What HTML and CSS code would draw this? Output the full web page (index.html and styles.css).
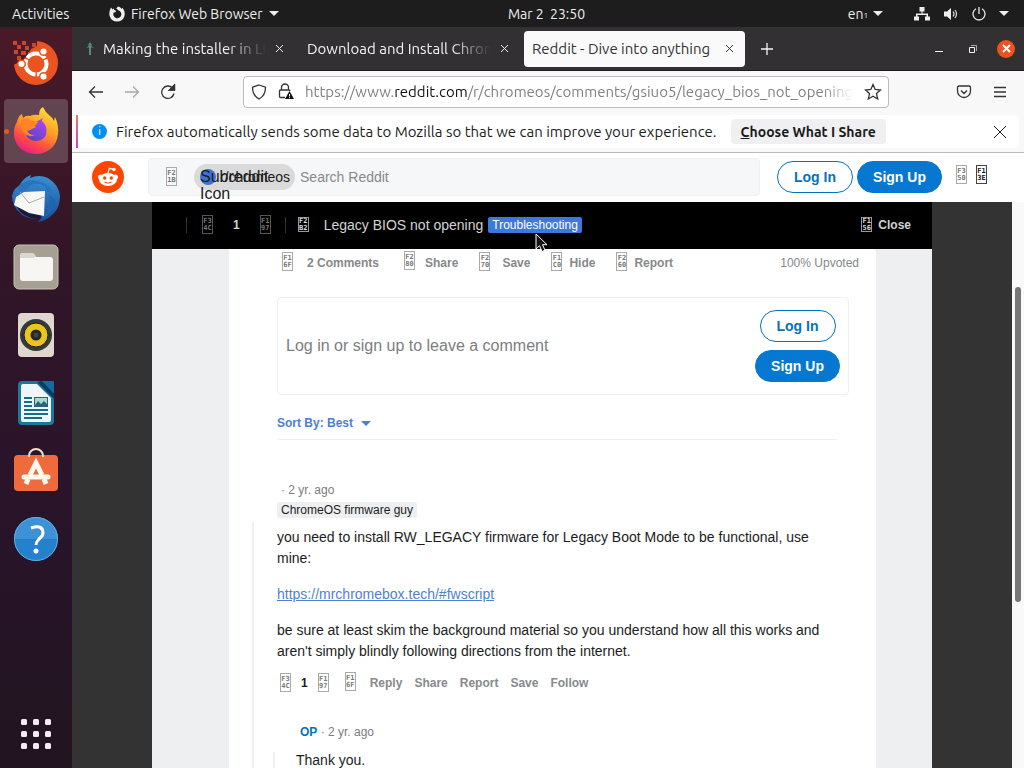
FILE: index.html
```html
<!DOCTYPE html>
<html lang="en">
<head>
<meta charset="utf-8">
<title>Reddit - Dive into anything</title>
<link rel="stylesheet" href="styles.css">
</head>
<body class="desktop">
<header class="topbar">
  <button class="top-btn">Activities</button>
  <button class="top-btn app-menu">
    <svg width="16" height="16" viewBox="0 0 16 16"><path d="M1.500 2.500C.2 5.500 0 8 .8 10.500A7.700 7.700 0 0 0 15.300 10.500C16.300 7.500 15.500 3.800 13.200 1.800L12.800 3C11.800 1.600 10.300.6 9 .5L7.300 2.500 9.300 4.300A4 4 0 1 1 4.700 6.500L6.500 6.200 7 4.700 5 3.800 4.800 2.200 3.500 3.600 2 1.500Z" fill="#eee"/></svg>
    <span>Firefox Web Browser</span><i class="tri"></i>
  </button>
  <time class="clock">Mar 2&nbsp; 23:50</time>
  <div class="status">
    <button class="top-btn lang">en<small>1</small><i class="tri"></i></button>
    <svg width="16" height="14" viewBox="0 0 16 14"><path d="M5.500 0h5v4.500h-2v2H14v3h2v4h-5v-4h1.500V8h-9v1.500H5v4H0v-4h2v-3h5.500v-2h-2z" fill="#eee"/></svg>
    <svg width="16" height="14" viewBox="0 0 16 14"><path d="M1 4.500h3L8 1v12L4 9.500H1z" fill="#eee"/><path d="M10 4.500q2 2.500 0 5M12 3q3 4 0 8" fill="none" stroke="#ddd" stroke-width="1.200"/></svg>
    <svg width="14" height="14" viewBox="0 0 14 14"><path d="M4 1.800a6 6 0 1 0 6 0M7 0v7" fill="none" stroke="#e5e5e5" stroke-width="1.300"/></svg>
    <i class="tri"></i>
  </div>
</header>
<div class="workspace">
<nav class="dock">
  <button class="dock-item" aria-label="Ubuntu"><svg width="46" height="46" viewBox="0 0 46 46"><circle cx="23" cy="23" r="22" fill="#e95420"/><path d="M0 0h24v6l-6 3-3 6-6 6-9 4z" fill="#4c1a28"/><path d="M0 1h4v4H0zM9 1h4v4H9zM4 5h4v4H4zM12 6h4v4h-4zM1 10h4v4H1zM8 11h5v4H8zM19 3h4v4h-4zM15 12h4v4h-4zM4 16h4v4H4z" fill="#c8462a"/><circle cx="23" cy="24" r="10.500" fill="none" stroke="#fff" stroke-width="4" stroke-dasharray="20.500 1.500" stroke-dashoffset="5"/><g fill="#fff" stroke="#e95420" stroke-width="1.500"><circle cx="8.500" cy="24" r="3.800"/><circle cx="30.500" cy="11.500" r="3.800"/><circle cx="30.500" cy="36.500" r="3.800"/></g></svg></button>
  <button class="dock-item active" aria-label="Firefox"><svg width="48" height="48" viewBox="0 0 48 48"><defs><linearGradient id="fx" x1=".8" y1="0" x2=".3" y2="1"><stop offset="0" stop-color="#ffe73a"/><stop offset=".45" stop-color="#ff9a24"/><stop offset=".75" stop-color="#ff4b45"/><stop offset="1" stop-color="#e81c87"/></linearGradient><linearGradient id="fy" x1=".8" y1="0" x2=".2" y2="1"><stop offset="0" stop-color="#b545ed"/><stop offset="1" stop-color="#5344c5"/></linearGradient></defs><path d="M5 15Q6 9 10 7l1 4q3-3 7-2 4-2 9-1Q27 2 31 0q2 5 7 9 3 2 4 5l1-4q4 8 3 17C45 39 36 47 24 47 11 47 2 38 2 26q0-7 3-11Z" fill="url(#fx)"/><path d="M17 14l7 1 7-4q-2 3 0 4 5 5 3 13-3 6-11 6-9-1-9-9l10-5Z" fill="url(#fy)"/><path d="M9 13q6-4 11 1l6 1q-2 5-8 5l-3 3q1 5 8 5-6 3-11-2-4-4-3-13" fill="#ff8426"/></svg></button>
  <button class="dock-item" aria-label="Thunderbird"><svg width="50" height="50" viewBox="0 0 50 50"><defs><linearGradient id="tb" x1="0" y1="0" x2="0" y2="1"><stop offset="0" stop-color="#3b91d4"/><stop offset="1" stop-color="#154c9b"/></linearGradient></defs><path d="M8 12Q13 3 20 1l-1 3q9-4 18 0 11 7 12 18 0 11-6 17-7 8-16 9l4-5q-12 4-21-3Q1 32 1 22q2-9 10-12" fill="url(#tb)"/><path d="M6 33l10 3 15 5-2 3q-16 2-23-11" fill="#1b1838"/><path d="M5 23l8-5 21-1-1 25-15-3-15-8Z" fill="#f7f7f5"/><path d="M8 12q8-8 19-5 12 2 16 14-4-4-7-3 0-6-7-8-9-1-12 4l-8 4Z" fill="#2775bd"/><path d="M9 18l9 11 15-6" fill="none" stroke="#aaa"/><path d="M38 20q4 13-8 25 13-5 14-19" fill="#2065ae"/></svg></button>
  <button class="dock-item" aria-label="Files"><svg width="46" height="46" viewBox="0 0 46 46"><rect x="1" y="1" width="44" height="44" rx="5" fill="#a69f94" stroke="#c8c2b8"/><path d="M7 12q0-3 3-3h10l3 4h14q3 0 3 3v18q0 3-3 3H10q-3 0-3-3Z" fill="#f7f6f2"/><path d="M7 14h14l2-2-3-3H10q-3 0-3 3Z" fill="#dbd7ce"/></svg></button>
  <button class="dock-item" aria-label="Rhythmbox"><svg width="46" height="46" viewBox="0 0 46 46"><rect x="5" y="1" width="36" height="44" rx="4" fill="#ded8cf"/><circle cx="23" cy="23" r="16" fill="#343a3c"/><circle cx="23" cy="23" r="12" fill="#e9c51e" stroke="#1c1e1f"/><circle cx="23" cy="23" r="5.500" fill="#24282b"/><circle cx="23" cy="23" r="2.500" fill="#424344"/></svg></button>
  <button class="dock-item" aria-label="LibreOffice Writer"><svg width="46" height="46" viewBox="0 0 46 46"><path d="M9 1h18l14 14v26q0 4-4 4H9q-4 0-4-4V5q0-4 4-4Z" fill="#1e789b"/><path d="M10 4h14l14 14v22q0 2-2 2H10q-2 0-2-2V6q0-2 2-2Z" fill="#eef6fa"/><path d="M28 1h12q1 0 1 1v12Z" fill="#146aa1"/><path d="M24 2l17 17v-5L29 1Z" fill="#063b68"/><path d="M11 18h8M11 22h8M11 26h8M11 30h24M11 34h24M11 38h18" stroke="#176c86" stroke-width="2"/><path d="M21 17h14v10H21z" fill="#28657c"/><path d="M22 18h12v6l-3-3-3 3-3-3-3 4z" fill="#a6dccc"/></svg></button>
  <button class="dock-item" aria-label="Ubuntu Software"><svg width="46" height="46" viewBox="0 0 46 46"><rect x="1" y="7" width="44" height="36" rx="4" fill="#ef6b3d"/><path d="M16 9V8a7 7 0 0 1 14 0v1" fill="none" stroke="#f5ded3" stroke-width="2"/><path d="M17 27l6-12 6 12M13 36l2-5M33 36l-2-5" fill="none" stroke="#fff8ed" stroke-width="5"/><path d="M11 29h24" stroke="#fff8ed" stroke-width="5" stroke-linecap="round"/></svg></button>
  <button class="dock-item" aria-label="Help"><svg width="46" height="46" viewBox="0 0 46 46"><circle cx="23" cy="23" r="22" fill="#2581cb"/><path d="M1 23a22 22 0 0 1 44 0Z" fill="#3c91d7"/><circle cx="23" cy="23" r="21.500" fill="none" stroke="#64ace0"/><path d="M18 12q12-4 12 5 0 3-4 6-3 3-3 6" fill="none" stroke="#fff" stroke-width="3"/><circle cx="23" cy="35" r="2.500" fill="#fff"/></svg></button>
  <button class="dock-item apps" aria-label="Show applications"><svg width="30" height="30" viewBox="0 0 30 30"><g fill="#f7eaf6"><rect width="6" height="6" rx="1.500"/><rect x="12" width="6" height="6" rx="1.500"/><rect x="24" width="6" height="6" rx="1.500"/><rect y="12" width="6" height="6" rx="1.500"/><rect x="12" y="12" width="6" height="6" rx="1.500"/><rect x="24" y="12" width="6" height="6" rx="1.500"/><rect y="24" width="6" height="6" rx="1.500"/><rect x="12" y="24" width="6" height="6" rx="1.500"/><rect x="24" y="24" width="6" height="6" rx="1.500"/></g></svg></button>
</nav>
<main class="window">
  <div class="tabs">
    <div class="tab"><svg width="8" height="14" viewBox="0 0 8 14"><path d="M4 0l2 3-1 1v9H3V4L2 3zM0 6l4-3 4 3-4-1z" fill="#568982"/></svg><span class="tab-title fade">Making the installer in Linux</span><button class="x" aria-label="Close tab"><svg width="9" height="9" viewBox="0 0 9 9"><path d="M1 1l7 7M8 1L1 8"/></svg></button></div>
    <div class="tab"><span class="tab-title fade">Download and Install Chrome OS</span><button class="x" aria-label="Close tab"><svg width="9" height="9" viewBox="0 0 9 9"><path d="M1 1l7 7M8 1L1 8"/></svg></button></div>
    <div class="tab current"><span class="tab-title">Reddit - Dive into anything</span><button class="x" aria-label="Close tab"><svg width="9" height="9" viewBox="0 0 9 9"><path d="M1 1l7 7M8 1L1 8"/></svg></button></div>
    <button class="x newtab" aria-label="New tab"><svg width="12" height="12" viewBox="0 0 12 12"><path d="M6 0v12M0 6h12"/></svg></button>
    <div class="win-controls">
      <button class="x" aria-label="Minimize"><svg width="8" height="8" viewBox="0 0 8 8"><path d="M0 6.500h8"/></svg></button>
      <button class="x" aria-label="Restore"><svg width="8" height="8" viewBox="0 0 8 8"><path d="M.5 2.500h5v5h-5z"/><path d="M2 .5h5.500V6" opacity=".6"/></svg></button>
      <button class="x close" aria-label="Close"><svg width="9" height="9" viewBox="0 0 9 9"><path d="M1 1l7 7M8 1L1 8"/></svg></button>
    </div>
  </div>
  <div class="toolbar">
    <button class="tool" aria-label="Back"><svg width="16" height="16" viewBox="0 0 16 16"><path d="M15 8H2M7 2.500L1.500 8 7 13.500"/></svg></button>
    <button class="tool dim" aria-label="Forward"><svg width="16" height="16" viewBox="0 0 16 16"><path d="M1 8h13M9 2.500L14.500 8 9 13.500"/></svg></button>
    <button class="tool" aria-label="Reload"><svg width="16" height="16" viewBox="0 0 16 16"><path d="M14 9.500A6.200 6.200 0 1 1 12.500 4L14 5.500M14.500 1v5h-5z"/><path d="M14.500 1v5h-5z" fill="#333"/></svg></button>
    <div class="urlbar">
      <svg width="16" height="16" viewBox="0 0 16 16"><path d="M8 1l6.500 2.200Q14.500 11.500 8 15 1.500 11.500 1.500 3.200Z"/></svg>
      <svg width="16" height="17" viewBox="0 0 16 17"><path d="M3.500 7V4.500a3.500 3.500 0 0 1 7 0V7M7 14.500H2.500q-1 0-1-1V8q0-1 1-1h8.500q1 0 1 1"/><path d="M11.500 8l4.500 8H7z" fill="#111" stroke="none"/><path d="M11.500 11v2.500M11.500 14.200v1" stroke="#fff" stroke-width="1"/></svg>
      <div class="url" role="textbox" aria-label="Address">https://www.<b>reddit.com</b>/r/chromeos/comments/gsiuo5/legacy_bios_not_opening</div>
      <svg width="18" height="18" viewBox="0 0 18 18"><path d="M9 1.500l2.200 4.900 5.300.6-4 3.600 1.200 5.400L9 13.300 4.300 16l1.200-5.400-4-3.600 5.300-.6Z"/></svg>
    </div>
    <div class="tool-end">
      <button class="tool" aria-label="Save to Pocket"><svg width="16" height="16" viewBox="0 0 16 16"><path d="M3 2h10q1.500 0 1.500 1.500V7a6.500 6.500 0 0 1-13 0V3.500Q1.500 2 3 2ZM5 6.500l3 3 3-3"/></svg></button>
      <button class="tool" aria-label="Menu"><svg width="14" height="12" viewBox="0 0 14 12"><path d="M1 1.500h12M1 6h12M1 10.500h12"/></svg></button>
    </div>
  </div>
  <div class="infobar">
    <div class="notice">
      <span class="info">i</span>
      <span>Firefox automatically sends some data to Mozilla so that we can improve your experience.</span>
      <button class="choose"><u>C</u>hoose What I Share</button>
      <button class="tool dismiss" aria-label="Dismiss"><svg width="12" height="12" viewBox="0 0 12 12"><path d="M0 0l12 12M12 0L0 12"/></svg></button>
    </div>
  </div>
  <div class="site">
    <header class="reddit-head">
      <a href="#" class="logo" aria-label="Reddit"><svg width="32" height="32" viewBox="0 0 32 32"><circle cx="16" cy="16" r="16" fill="#ff4500"/><g fill="#fff"><circle cx="8.500" cy="16" r="2.500"/><circle cx="23.500" cy="16" r="2.500"/><ellipse cx="16" cy="18.500" rx="9" ry="6.500"/><circle cx="22" cy="8.500" r="1.700"/></g><path d="M16 12.500l1.300-5.200 4.200 1" fill="none" stroke="#fff" stroke-width="1.200"/><circle cx="12.700" cy="17" r="1.700" fill="#ff4500"/><circle cx="19.300" cy="17" r="1.700" fill="#ff4500"/><path d="M12.500 21q3.500 2 7 0" fill="none" stroke="#ff4500" stroke-width="1.100"/></svg></a>
      <div class="search">
        <i class="tofu">F2<br>1B</i>
        <span class="pill"><i class="dot"></i><span class="alt">Subreddit Icon</span>r/chromeos</span>
        <input type="text" placeholder="Search Reddit" aria-label="Search Reddit">
      </div>
      <div class="auth"><button class="round">Log In</button><button class="round solid">Sign Up</button></div>
      <div class="head-icons"><i class="tofu">F3<br>50</i><i class="tofu dark">F1<br>3E</i></div>
    </header>
    <div class="viewport">
      <div class="overlay">
        <div class="postbar">
          <div class="votes"><i class="tofu">F3<br>4C</i><b>1</b><i class="tofu">F1<br>97</i></div>
          <i class="tofu small">F2<br>B2</i>
          <h1>Legacy BIOS not opening</h1>
          <span class="flair">Troubleshooting
            <svg class="cursor" width="14" height="20" viewBox="0 0 14 20"><path d="M1 1v15l3.500-3.300L7 18.500l3-1.300-2.500-5.500H12Z" fill="#151515" stroke="#fff"/></svg>
          </span>
          <button class="closebtn"><i class="tofu small">F1<br>56</i>Close</button>
        </div>
        <article class="card">
          <div class="post-actions">
            <button><i class="tofu">F1<br>6F</i>2 Comments</button>
            <button class="share"><i class="tofu up">F2<br>80</i>Share</button>
            <button class="save"><i class="tofu">F2<br>70</i>Save</button>
            <button class="hide"><i class="tofu">F1<br>C0</i>Hide</button>
            <button class="report"><i class="tofu">F2<br>60</i>Report</button>
            <span class="upvoted">100% Upvoted</span>
          </div>
          <div class="signup">
            <span>Log in or sign up to leave a comment</span>
            <div class="signup-btns"><button class="round">Log In</button><button class="round solid">Sign Up</button></div>
          </div>
          <div class="sort"><button>Sort By: Best<i class="tri"></i></button></div>
          <section class="comment">
            <div class="meta">· 2 yr. ago</div>
            <span class="user-flair">ChromeOS firmware guy</span>
            <div class="thread">
              <p>you need to install RW_LEGACY firmware for Legacy Boot Mode to be functional, use mine:</p>
              <p><a href="#fwscript">https://mrchromebox.tech/#fwscript</a></p>
              <p>be sure at least skim the background material so you understand how all this works and aren't simply blindly following directions from the internet.</p>
              <div class="comment-actions"><i class="tofu">F3<br>4C</i><b>1</b><i class="tofu">F1<br>97</i><i class="tofu chat">F1<br>6F</i><button>Reply</button><button>Share</button><button>Report</button><button>Save</button><button>Follow</button></div>
              <section class="reply">
                <div class="meta"><b>OP</b> · 2 yr. ago</div>
                <div class="reply-body"><p>Thank you.</p></div>
              </section>
            </div>
          </section>
        </article>
      </div>
      <div class="scroll"><i></i></div>
    </div>
  </div>
</main>
</div>
</body>
</html>
```
FILE: styles.css
```css
* { box-sizing: border-box; }
body { margin: 0; font-family: Ubuntu, "Noto Sans", sans-serif; font-size: 14px; color: #1c1c1c; }
button { font: inherit; color: inherit; background: none; border: 0; padding: 0; white-space: nowrap; }
svg { display: block; flex: none; }
i { font-style: normal; }
p, h1 { margin: 0; }

.desktop { height: 100vh; overflow: hidden; display: flex; flex-direction: column; background: #333; }
.topbar { height: 27px; flex: none; background: #1d1d1d; color: #eee; display: grid; grid-template-columns: 97px 1fr auto 1fr; align-items: center; padding: 0 15px 0 12px; }
.topbar > .top-btn { justify-self: start; }
.app-menu { display: flex; align-items: center; gap: 6px; }
.clock { padding-right: 25px; }
.status { display: flex; align-items: center; justify-content: flex-end; gap: 13px; }
.lang { display: flex; align-items: center; margin-right: 18px; }
.lang small { font-size: 8px; margin-right: 5px; padding-top: 4px; }
.tri { display: inline-block; border: 5px solid transparent; border-top-color: currentColor; border-bottom: 0; flex: none; }

.workspace { flex: 1; min-height: 0; display: flex; }
.dock { width: 72px; flex: none; display: flex; flex-direction: column; align-items: center; gap: 4px; padding: 4px; background: linear-gradient(#4a1928, #321527 30%, #29142a 65%, #211520); }
.dock-item { width: 64px; height: 64px; flex: none; display: grid; place-items: center; border-radius: 4px; }
.dock-item.active { background: #634451; position: relative; }
.dock-item.active::before { content: ""; position: absolute; left: 0; top: 30px; width: 5px; height: 5px; border-radius: 50%; background: #e95420; }
.apps { margin-top: auto; height: 60px; }

.window { flex: 1; min-width: 0; display: flex; flex-direction: column; background: #f8f8f8; }
.tabs { height: 44px; flex: none; display: flex; align-items: center; background: #323032; color: #f4f4f4; border-bottom: 1px solid #1d1a1d; padding-right: 9px; font-size: 15px; }
.tab { width: 226px; height: 36px; flex: 0 1 auto; display: flex; align-items: center; gap: 9px; padding: 0 14px; }
.tab-title { flex: 1; overflow: hidden; white-space: nowrap; }
.tab + .tab { padding-left: 9px; padding-right: 15px; }
.fade { mask-image: linear-gradient(to left, transparent, #000 40px); }
.tab.current { width: 221px; background: #fafafa; color: #333; border-radius: 4px; }
.tab + .tab.current { padding: 0 11px 0 8px; }
.x { display: grid; place-items: center; }
.x svg, .tool svg, .urlbar svg { fill: none; stroke: currentColor; stroke-width: 1.300; }
.tab .x svg, .dismiss svg { stroke-width: 1; }
.newtab { width: 44px; }
.win-controls { margin-left: auto; display: flex; align-items: center; gap: 26px; }
.win-controls .x svg { stroke-width: 1; }
.close { width: 18px; height: 18px; border-radius: 50%; background: #e95420; color: #fff; margin-left: -6px; }
.win-controls .close svg { stroke-width: 2; }

.toolbar { height: 41px; flex: none; display: flex; align-items: center; gap: 20px; padding: 0 17px 0 16px; color: #333; }
.dim { opacity: .4; }
.urlbar { flex: 1; min-width: 0; height: 32px; display: flex; align-items: center; gap: 11px; margin-left: 47px; padding: 0 6px 0 7px; border: 1px solid #bbb; border-radius: 4px; background: #fff; }
.url { flex: 1; min-width: 0; overflow: hidden; white-space: nowrap; color: #818181; font-size: 15px; mask-image: linear-gradient(to left, transparent, #000 30px); }
.url b { font-weight: 400; color: #111; }
.tool-end { display: flex; align-items: center; gap: 21px; margin-left: 47px; }
.infobar { height: 41px; flex: none; border-bottom: 1px solid #bbb; padding: 3px 5px 4px 4px; }
.notice { height: 33px; display: flex; align-items: center; background: #fff; border-radius: 4px; padding: 0 13px 0 14px; border-left: 2px solid; border-image: linear-gradient(#ef7857, #b14dd7) 1; font-size: 15px; white-space: nowrap; }
.info { width: 15px; height: 15px; border-radius: 50%; background: #0290ee; color: #fff; font-size: 11px; line-height: 15px; text-align: center; margin-right: 9px; }
.choose { margin-left: 14px; height: 25px; padding: 0 10px; background: #f0f0f2; border-radius: 4px; font-weight: 700; font-size: 14px; }
.dismiss { margin-left: auto; }

.site { flex: 1; min-height: 0; display: flex; flex-direction: column; font-family: "Liberation Sans", Arial, sans-serif; }
.reddit-head { height: 49px; flex: none; display: flex; align-items: center; background: #fff; padding: 0 37px 2px 20px; }
.search { flex: 1; min-width: 0; height: 38px; margin-left: 24px; display: flex; align-items: center; background: #f6f7f8; border: 1px solid #f0f1f2; border-radius: 4px; padding-left: 17px; }
.pill { position: relative; height: 26px; margin-left: 17px; display: flex; align-items: center; gap: 4px; padding: 0 5px 0 6px; border-radius: 13px; background: #dadadb; }
.dot { width: 16px; height: 16px; border-radius: 50%; background: #3d73d2; }
.alt { position: absolute; left: 6px; top: 4px; width: 80px; font-size: 16px; line-height: 17px; }
.search input { flex: 1; min-width: 0; border: 0; background: none; padding: 0; margin-left: 5px; font: inherit; outline: 0; }
.search input::placeholder { color: #87898b; }
.auth { display: flex; gap: 4px; margin: 0 14px 0 17px; }
.round { width: 76px; height: 32px; border: 1px solid #0672ba; border-radius: 16px; color: #0672ba; font-weight: 700; background: #fff; }
.round.solid { width: 85px; background: #0678d2; border-color: #0678d2; color: #fff; }
.head-icons { display: flex; gap: 9px; padding-bottom: 4px; }
.tofu { display: block; flex: none; width: 11px; height: 19px; border: 1px solid #aaa; padding-top: 2px; font: 700 7px/7px "DejaVu Sans Mono", monospace; text-align: center; color: #777; white-space: nowrap; }
.tofu.dark { color: #111; border-color: #444; }
.tofu.small { height: 15px; padding-top: 0; color: #ddd; border-color: #999; }

.viewport { flex: 1; min-height: 0; display: flex; background: #333; }
.overlay { flex: 1; min-width: 0; margin: 0 80px; background: #edeff1; display: flex; flex-direction: column; overflow: hidden; }
.scroll { width: 12px; flex: none; background: #f9f9f9; padding: 85px 3px 0; }
.scroll i { display: block; width: 6px; height: 315px; border-radius: 3px; background: #777; }
.postbar { position: relative; z-index: 1; height: 47px; flex: none; display: flex; align-items: center; padding: 0 21px 2px 34px; background: #000; color: #d2d4d5; }
.votes { height: 16px; display: flex; align-items: center; gap: 20px; padding: 0 14px 0 15px; border: solid #333; border-width: 0 1px; margin-right: 12px; }
.votes b { font-size: 12px; }
.votes .tofu { border-color: #555; }
.postbar h1 { font-size: 14px; font-weight: 400; margin-left: 15px; white-space: nowrap; }
.flair { position: relative; margin-left: 5px; padding: 0 4px; background: #3d79dc; border-radius: 2px; color: #fff; font-size: 12px; line-height: 16px; }
.cursor { position: absolute; left: 47px; top: 16px; }
.closebtn { margin-left: auto; display: flex; align-items: center; gap: 6px; font-size: 12px; font-weight: 700; }

.card { flex: 1; margin: 0 56px 0 77px; background: #fff; padding: 0 27px 0 48px; border-radius: 0 4px 0 0; }
.post-actions { height: 48px; display: flex; align-items: flex-start; padding: 2px 0 0 5px; font-size: 12px; font-weight: 700; color: #868889; margin-right: -10px; }
.post-actions button { display: flex; align-items: center; gap: 14px; line-height: 24px; }
.post-actions .tofu { margin-bottom: 3px; }
.post-actions .share { margin-left: 25px; gap: 10px; }
.post-actions .save { margin-left: 21px; gap: 12px; }
.post-actions .hide { margin-left: 21px; gap: 7px; }
.post-actions .report { margin-left: 21px; gap: 7px; }
.post-actions .up { margin-bottom: 5px; }
.upvoted { margin-left: auto; font-weight: 400; line-height: 24px; }
.signup { height: 98px; display: flex; align-items: center; justify-content: space-between; padding: 0 8px; border: 1px solid #edeff1; border-radius: 4px; color: #7c7e80; font-size: 16px; }
.signup-btns { display: grid; gap: 8px; justify-items: center; font-size: 14px; }
.sort { margin-right: 12px; height: 45px; padding-top: 20px; border-bottom: 1px solid #edeff1; color: #4c7fd0; font-size: 12px; font-weight: 700; line-height: 16px; }
.sort button { display: flex; align-items: center; gap: 8px; }
.comment { padding-top: 42px; }
.meta { font-size: 12px; line-height: 16px; color: #7c7c7c; padding-left: 4px; }
.user-flair { display: inline-block; margin-top: 4px; padding: 0 4px; background: #edeff1; border-radius: 2px; font-size: 12px; line-height: 16px; }
.thread { margin: 4px 0 0 -25px; padding: 5px 24px 0 23px; border-left: 2px solid #edeff1; line-height: 21px; }
.thread p + p { margin-top: 15px; }
.thread a { color: #4f82d0; }
.comment-actions { height: 25px; margin-top: 9px; display: flex; align-items: center; gap: 12px; padding-left: 3px; font-size: 12px; font-weight: 700; color: #878a8c; }
.comment-actions b { color: #1c1c1c; margin: 0 -2px; }
.comment-actions .tofu { margin-bottom: 3px; }
.comment-actions .chat { margin: 0 2px 4px 4px; }
.reply { margin-left: -4px; padding-top: 28px; }
.reply .meta { padding-left: 27px; }
.meta b { color: #0672ba; }
.reply-body { margin-top: 12px; padding-left: 21px; border-left: 2px solid #edeff1; line-height: 16px; }
```
